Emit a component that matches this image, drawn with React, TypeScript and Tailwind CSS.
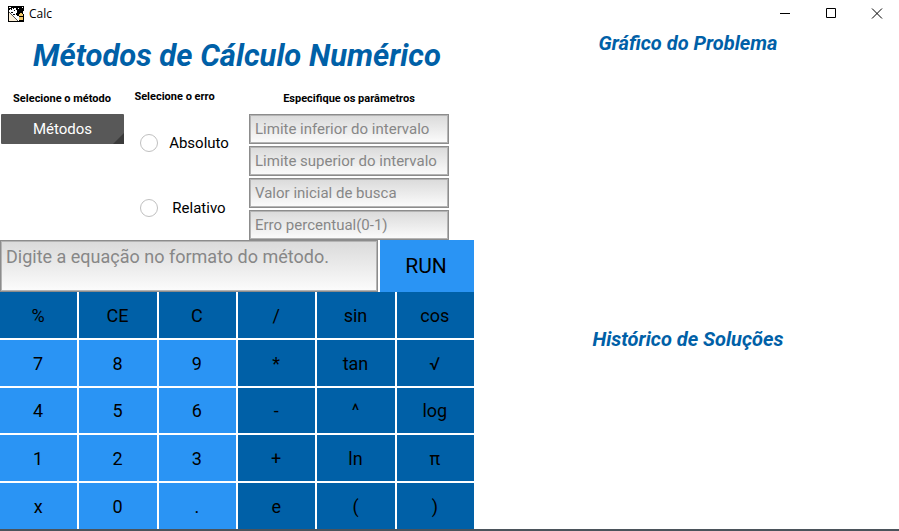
import type { ReactNode } from "react";

const keys = [
  "%", "CE", "C", "/", "sin", "cos",
  "7", "8", "9", "*", "tan", "√",
  "4", "5", "6", "-", "^", "log",
  "1", "2", "3", "+", "ln", "π",
  "x", "0", ".", "e", "(", ")",
];

const parameters = [
  "Limite inferior do intervalo",
  "Limite superior do intervalo",
  "Valor inicial de busca",
  "Erro percentual(0-1)",
];

const fieldStyle =
  "block w-full rounded-none border border-[#8c8c8c] bg-linear-to-b from-[#dadada] to-[#fcfcfc] text-black shadow-[inset_0_0_0_1px_#b4b4b4] placeholder:text-[#878787] placeholder:opacity-100 outline-none";

function AppIcon() {
  return (
    <svg width="16" height="16" viewBox="0 0 16 16" shapeRendering="crispEdges" aria-hidden="true">
      <rect width="16" height="16" fill="#000" />
      <path d="M1 1h2v1h-2zM1 4h1v-1h2v-1h4v2h1v3h-1v2h1v6l-8-8z" fill="#fff" />
      <path d="M1 6l9 9H1z" fill="#fdf0d8" />
      <path d="M3 3h1v1h-1zM5 2h1v1h-1zM6 4h1v1h-1zM3 6h2v1h-2zM5 8h2v1h-2z" fill="#000" />
      <path d="M9 10h2v5h-2z" fill="#fff" />
      <path d="M1 6l9 9" stroke="#555" strokeWidth="1" />
      <path d="M11 8h1V7h2v1h1v2h-4zM11 11h4v3h-4z" fill="#f3c968" />
      <path d="M14 1h1v1h-1zM10 2h1v1h-1zM15 5h1v3h-1z" fill="#fff" />
    </svg>
  );
}

function WindowButton({ label, children }: { label: string; children: ReactNode }) {
  return (
    <button type="button" aria-label={label} className="flex h-full w-[46px] items-center justify-center pl-[2px]">
      <svg width="12" height="11" viewBox="0 0 12 11" fill="none" stroke="#000" aria-hidden="true">
        {children}
      </svg>
    </button>
  );
}

function TitleBar() {
  return (
    <header className="flex h-[27px] items-center pl-2">
      <AppIcon />
      <span className="ml-[5px] font-['Open_Sans',sans-serif] text-xs">Calc</span>
      <div className="ml-auto flex h-full">
        <WindowButton label="Minimizar">
          <path d="M1 5.5h10" />
        </WindowButton>
        <WindowButton label="Maximizar">
          <path d="M1.5.5h9v9h-9z" />
        </WindowButton>
        <WindowButton label="Fechar">
          <path d="M1 .5l10 10M11 .5l-10 10" />
        </WindowButton>
      </div>
    </header>
  );
}

function ErrorOption({ label }: { label: string }) {
  return (
    <label className="flex h-[65px] items-center pl-4 text-[15px]">
      <input
        type="radio"
        name="erro"
        className="size-[18px] shrink-0 appearance-none rounded-full border border-[#c0c0c0] checked:bg-[#2a94f4]"
      />
      <span className="ml-2 w-[66px] pt-px text-center">{label}</span>
    </label>
  );
}

export default function App() {
  return (
    <div className="flex min-h-screen flex-col border-b-2 border-[#4b535b] bg-white font-[Roboto,sans-serif] text-black">
      <TitleBar />
      <main className="grid flex-1 grid-cols-[474fr_425fr]">
        <section className="flex min-w-0 flex-col">
          <h1 className="pt-[9px] pb-[6px] text-center text-[31px] leading-10 font-bold text-[#0060a7] italic">
            Métodos de Cálculo Numérico
          </h1>
          <form className="flex flex-1 flex-col">
            <div className="grid grid-cols-[124fr_125fr_200fr_25fr]">
              <div>
                <label htmlFor="metodo" className="block h-8 pt-[9px] text-center text-[11px] leading-4 font-bold">
                  Selecione o método
                </label>
                <div className="relative pl-px">
                  <select
                    id="metodo"
                    className="block h-[30px] w-full appearance-none rounded-[1px] bg-[#585858] text-center text-[15px] text-white [text-align-last:center]"
                  >
                    <option>Métodos</option>
                  </select>
                  <span className="pointer-events-none absolute right-0 bottom-0 size-[11px] bg-[#3b3b3b] [clip-path:polygon(100%_0,100%_100%,0_100%)]" />
                </div>
              </div>
              <fieldset className="min-w-0">
                <legend className="block h-7 w-full pt-[7px] pr-6 text-center text-[11px] leading-4 font-bold">
                  Selecione o erro
                </legend>
                <ErrorOption label="Absoluto" />
                <ErrorOption label="Relativo" />
              </fieldset>
              <fieldset className="min-w-0">
                <legend className="block h-8 w-full pt-[9px] text-center text-[11px] leading-4 font-bold">
                  Especifique os parâmetros
                </legend>
                <div className="flex flex-col gap-[2px]">
                  {parameters.map((name) => (
                    <input
                      key={name}
                      type="text"
                      aria-label={name}
                      placeholder={name}
                      className={`${fieldStyle} h-[30px] px-[5px] text-[15px]`}
                    />
                  ))}
                </div>
              </fieldset>
            </div>
            <div className="grid h-[52px] grid-cols-[378fr_94fr] gap-[2px]">
              <textarea
                aria-label="Equação"
                placeholder="Digite a equação no formato do método."
                className={`${fieldStyle} h-full resize-none overflow-hidden px-[5px] pt-1 text-lg leading-6`}
              />
              <button type="button" className="bg-[#2a94f4] pt-[2px] pr-[2px] text-[21px]">
                RUN
              </button>
            </div>
            <div className="grid flex-1 auto-rows-fr grid-cols-6 gap-[2px]">
              {keys.map((key, index) => (
                <button
                  key={key}
                  type="button"
                  className={`pt-[2px] pr-px text-lg ${index >= 6 && index % 6 < 3 ? "bg-[#2a94f4]" : "bg-[#0060a7]"}`}
                >
                  {key}
                </button>
              ))}
            </div>
          </form>
        </section>
        <div className="grid grid-rows-[296fr_206fr] pl-[3px] text-center text-xl leading-8 font-bold text-[#0060a7] italic">
          <section>
            <h2>Gráfico do Problema</h2>
          </section>
          <section>
            <h2>Histórico de Soluções</h2>
          </section>
        </div>
      </main>
    </div>
  );
}
